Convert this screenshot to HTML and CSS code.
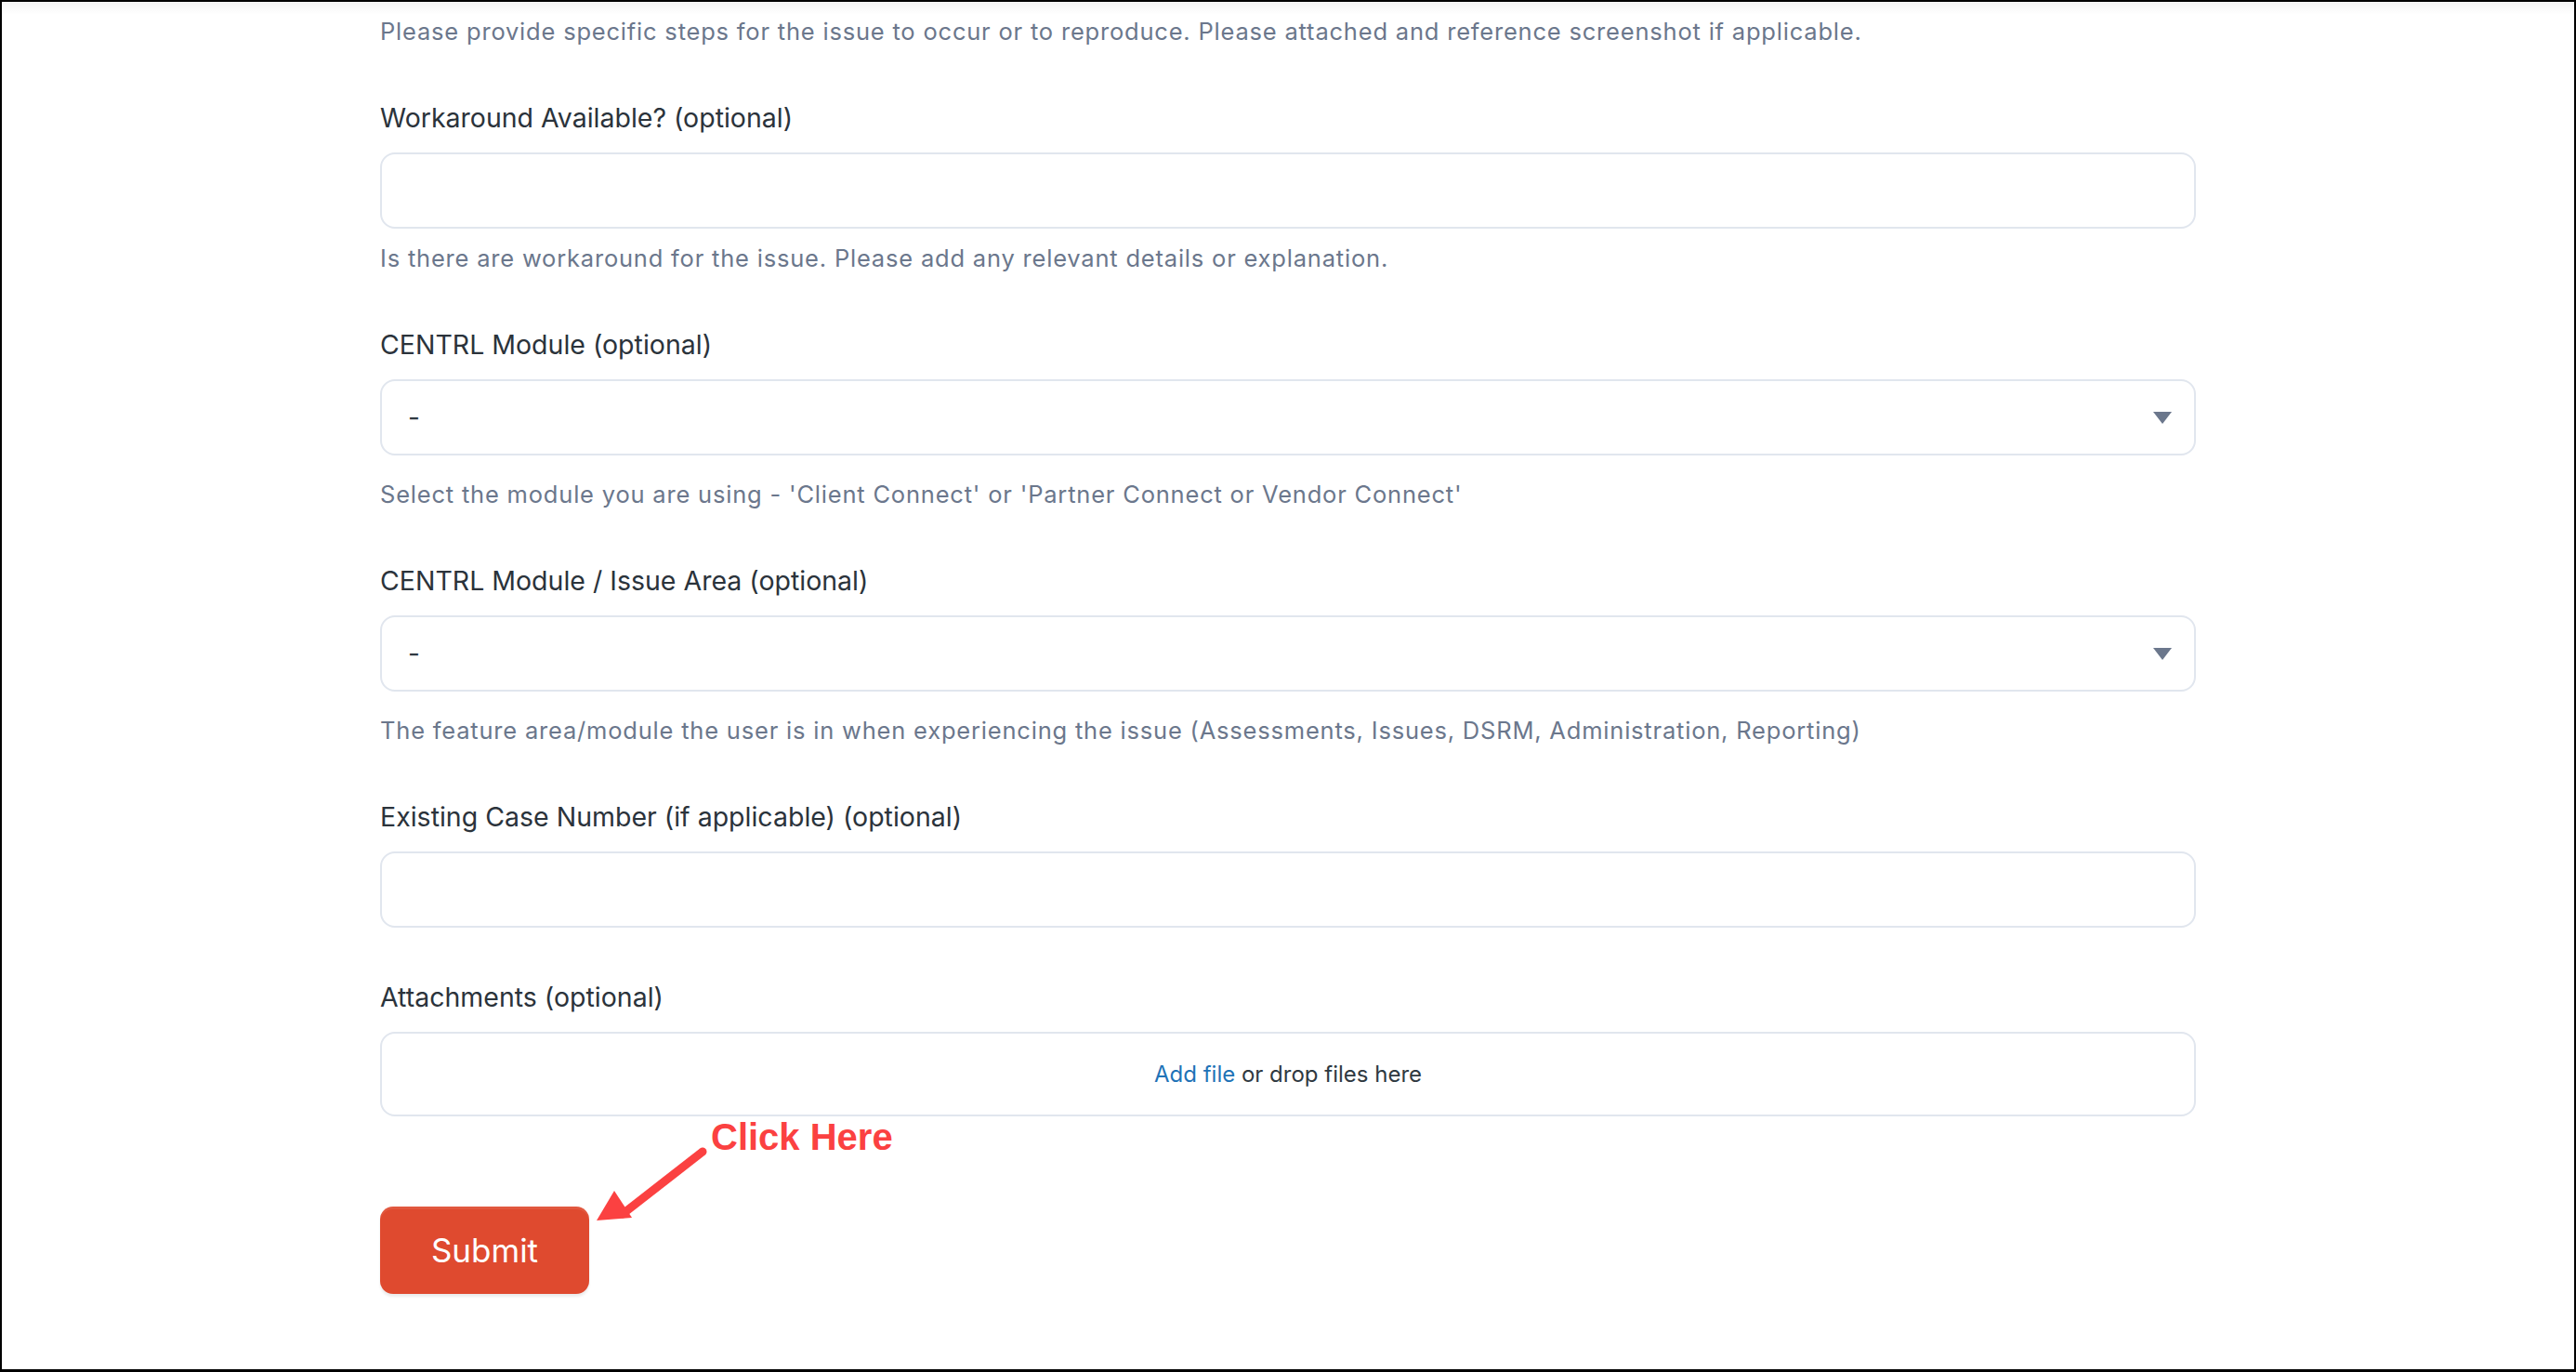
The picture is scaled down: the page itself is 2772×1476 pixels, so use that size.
FILE: index.html
```html
<!DOCTYPE html>
<html lang="en">
<head>
    <meta charset="UTF-8">
    <meta name="viewport" content="width=device-width, initial-scale=1.0">
    <title>Submit a request</title>
    <link rel="stylesheet" href="styles.css">
</head>
<body>
    <div class="frame">
        <div class="top-shadow"></div>
        <form class="request-form">
            <p class="hint">Please provide specific steps for the issue to occur or to reproduce. Please attached and reference screenshot if applicable.</p>

            <div class="field">
                <label class="field-label">Workaround Available? (optional)</label>
                <input type="text" class="text-input">
                <p class="hint">Is there are workaround for the issue. Please add any relevant details or explanation.</p>
            </div>

            <div class="field">
                <label class="field-label">CENTRL Module (optional)</label>
                <div class="select-input">
                    <span>-</span>
                    <span class="caret"></span>
                </div>
                <p class="hint">Select the module you are using - 'Client Connect' or 'Partner Connect or Vendor Connect'</p>
            </div>

            <div class="field">
                <label class="field-label">CENTRL Module / Issue Area (optional)</label>
                <div class="select-input">
                    <span>-</span>
                    <span class="caret"></span>
                </div>
                <p class="hint">The feature area/module the user is in when experiencing the issue (Assessments, Issues, DSRM, Administration, Reporting)</p>
            </div>

            <div class="field">
                <label class="field-label">Existing Case Number (if applicable) (optional)</label>
                <input type="text" class="text-input">
            </div>

            <div class="field">
                <label class="field-label">Attachments (optional)</label>
                <div class="dropzone">
                    <a href="#" class="add-file">Add file</a>&nbsp;or drop files here
                </div>
            </div>

            <div class="actions">
                <button type="button" class="submit-btn">Submit</button>
                <!-- annotation overlay -->
                <span class="callout">Click Here</span>
                <svg class="callout-arrow" width="150" height="110" viewBox="0 0 150 110">
                    <line x1="122" y1="13" x2="36" y2="80" stroke="#fb4141" stroke-width="9" stroke-linecap="round"/>
                    <polygon points="8,87 27,55 46,84" fill="#fb4141"/>
                </svg>
            </div>
        </form>
    </div>
</body>
</html>
```

FILE: styles.css
```css
html, body {
    margin: 0;
    padding: 0;
    height: 100%;
    background: #000;
}

body {
    font-family: Inter, "Noto Sans", sans-serif;
    color: #2f3941;
    overflow: hidden;
}

.frame {
    position: relative;
    box-sizing: border-box;
    margin: 2px 2px 3px 2px;
    height: calc(100% - 5px);
    background: #fff;
    overflow: hidden;
}

.top-shadow {
    position: absolute;
    left: 0;
    right: 0;
    top: 0;
    height: 14px;
    background: linear-gradient(to bottom, rgba(0, 0, 0, 0.045), rgba(0, 0, 0, 0));
}

.request-form {
    max-width: 1954px;
    margin: 0 auto;
    padding-top: 14px;
}

.hint {
    margin: 0;
    font-size: 25.5px;
    line-height: 36px;
    letter-spacing: 0.8px;
    color: #6b778c;
}

.field {
    margin-top: 55px;
}

.field-label {
    display: block;
    font-size: 28.5px;
    line-height: 40px;
    margin-bottom: 17px;
    color: #2b333b;
}

.text-input {
    display: block;
    box-sizing: border-box;
    width: 100%;
    height: 82px;
    border: 2px solid #e1e6ee;
    border-radius: 16px;
    background: #fff;
    outline: none;
    font-family: inherit;
    font-size: 28px;
}

.text-input + .hint {
    margin-top: 14px;
}

.select-input {
    box-sizing: border-box;
    height: 82px;
    border: 2px solid #e1e6ee;
    border-radius: 16px;
    display: flex;
    align-items: center;
    justify-content: space-between;
    padding: 0 24px 0 28px;
    font-size: 28px;
    color: #2f3941;
    margin-bottom: 24px;
}

.caret {
    width: 0;
    height: 0;
    border-left: 10.5px solid transparent;
    border-right: 10.5px solid transparent;
    border-top: 13px solid #6b778c;
}

.dropzone {
    box-sizing: border-box;
    height: 91px;
    border: 2px solid #e1e6ee;
    border-radius: 16px;
    display: flex;
    align-items: center;
    justify-content: center;
    font-size: 24px;
    color: #2f3941;
}

.add-file {
    color: #1f73b7;
    text-decoration: none;
}

.actions {
    position: relative;
    margin-top: 97px;
}

.submit-btn {
    width: 225px;
    height: 94px;
    border: none;
    border-radius: 14px;
    background: #df4a2f;
    color: #fff;
    font-family: inherit;
    font-size: 35px;
    cursor: pointer;
    box-shadow: 0 3px 3px rgba(0, 0, 0, 0.08), inset 0 3px 0 rgba(255, 255, 255, 0.08);
}

.callout {
    position: absolute;
    left: 356px;
    top: -98px;
    font-family: "Liberation Sans", Arial, sans-serif;
    font-weight: bold;
    font-size: 40px;
    line-height: 46px;
    color: #fb4141;
}

.callout-arrow {
    position: absolute;
    left: 225px;
    top: -72px;
}
```
